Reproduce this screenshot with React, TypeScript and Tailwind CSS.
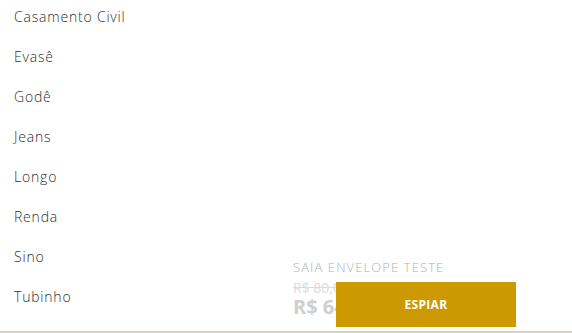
const CATEGORIES = [
  "Casamento Civil",
  "Evasê",
  "Godê",
  "Jeans",
  "Longo",
  "Renda",
  "Sino",
  "Tubinho",
];

export default function App() {
  return (
    <div
      className="relative h-[333px] w-[572px] overflow-hidden bg-white border-b-2 border-[#d8d3c4]"
      style={{ fontFamily: '"Open Sans", "Liberation Sans", sans-serif' }}
    >
      <div className="flex h-full">
        <ul className="w-[280px] shrink-0 pl-[14px] -mt-1">
          {CATEGORIES.map((c) => (
            <li
              key={c}
              className="h-10 flex items-center text-[14px] font-light tracking-[0.8px] text-[#2e2e2e]"
            >
              {c}
            </li>
          ))}
        </ul>
        <div className="flex-1 flex flex-col justify-end pl-[13px] pb-[12px]">
          <div className="text-[13px] font-light tracking-[1.1px] text-[#b0b0b0] leading-4">
            SAIA ENVELOPE TESTE
          </div>
          <div className="mt-[5px] text-[14px] text-[#dcdcdc] line-through leading-4">
            R$ 80,00
          </div>
          <div className="-mt-[1px] text-[20px] font-bold text-[#cfcfcf] leading-6">
            R$ 64,00
          </div>
        </div>
      </div>
      <button className="absolute left-[336px] top-[282px] w-[180px] h-[45px] bg-[#cc9900] text-white text-[12px] font-bold tracking-[0.3px]">
        ESPIAR
      </button>
    </div>
  );
}
